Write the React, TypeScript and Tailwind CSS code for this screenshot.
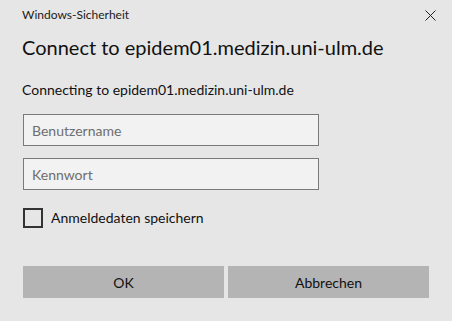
import React from 'react';

const App: React.FC = () => {
  return (
    <div
      className="w-[452px] h-[321px] bg-[#e6e6e6] text-black overflow-hidden"
      style={{ fontFamily: '"Segoe UI", Lato, "Noto Sans", sans-serif' }}
    >
      {/* title bar */}
      <div className="h-[30px] flex items-center justify-between pl-[22px] pr-[16px]">
        <span className="text-[12px] text-[#1a1a1a]">Windows-Sicherheit</span>
        <svg width="11" height="11" viewBox="0 0 11 11" className="text-[#222]">
          <path d="M0.5 0.5 L10.5 10.5 M10.5 0.5 L0.5 10.5" stroke="currentColor" strokeWidth="1" fill="none" />
        </svg>
      </div>

      <div className="px-[23px]">
        <h1 className="mt-[3px] text-[20px] leading-[28px] text-[#111] -ml-px">Connect to epidem01.medizin.uni-ulm.de</h1>

        <p className="mt-[19px] text-[14px] leading-[20px] text-[#111] -ml-px">Connecting to epidem01.medizin.uni-ulm.de</p>

        <div className="mt-[14px] flex flex-col gap-[12px] w-[296px]">
          <input
            placeholder="Benutzername"
            className="h-[32px] border border-[#7a7a7a] bg-[#f2f2f2] px-[8px] text-[14px] placeholder:text-[#6e6e6e] outline-none"
          />
          <input
            type="password"
            placeholder="Kennwort"
            className="h-[32px] border border-[#7a7a7a] bg-[#f2f2f2] px-[8px] text-[14px] placeholder:text-[#6e6e6e] outline-none"
          />
        </div>

        <label className="mt-[18px] flex items-center gap-[8px]">
          <span className="w-[20px] h-[20px] border-2 border-[#333]" />
          <span className="text-[14px] leading-[20px] text-[#111]">Anmeldedaten speichern</span>
        </label>

        <div className="mt-[38px] grid grid-cols-2 gap-[4px] w-[406px]">
          <button className="h-[32px] bg-[#b4b4b4] text-[14px] text-[#111]">OK</button>
          <button className="h-[32px] bg-[#b4b4b4] text-[14px] text-[#111]">Abbrechen</button>
        </div>
      </div>
    </div>
  );
};

export default App;
